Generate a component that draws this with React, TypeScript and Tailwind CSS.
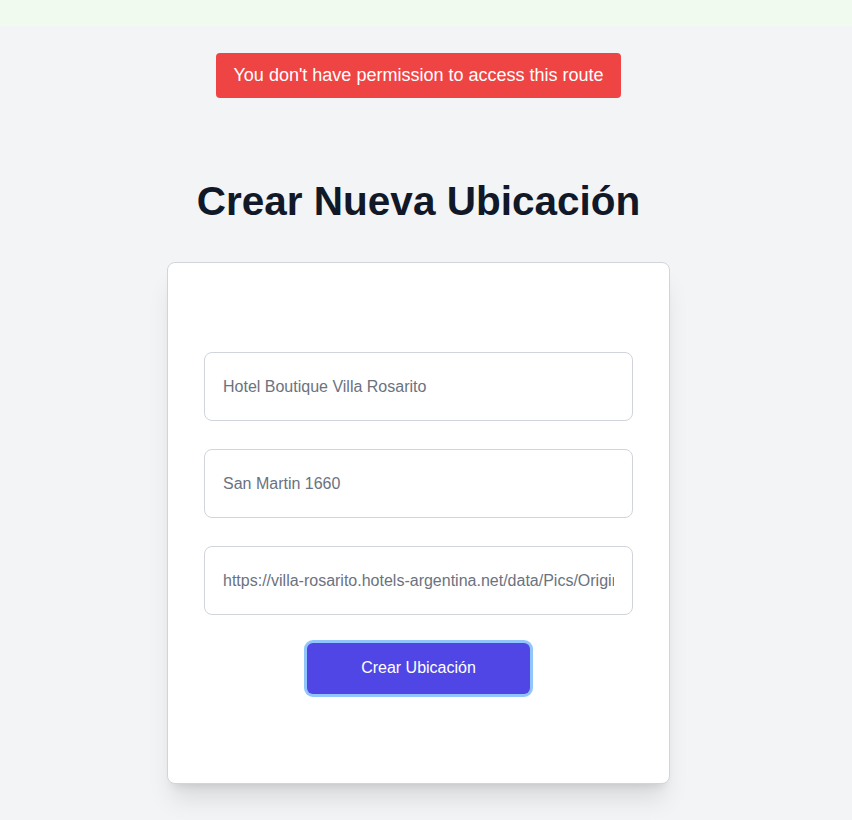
import React from 'react';

export default function App() {
  return (
    <div className="min-h-screen bg-[#f3f4f6] font-['Liberation_Sans',Arial,sans-serif]">
      <div className="h-[26px] bg-[#f0faee]" />

      <div className="w-[837px] flex flex-col items-center pt-[27px] pb-10">
        {/* toast */}
        <div className="bg-[#ef4444] text-white text-[18px] leading-[29px] px-[18px] py-2 rounded">
          You don't have permission to access this route
        </div>

        <h1 className="mt-[79px] text-[40.5px] leading-[48px] font-bold text-[#111827]">
          Crear Nueva Ubicación
        </h1>

        <form
          className="mt-[37px] w-[503px] bg-white border border-[#d1d5db] rounded-lg shadow-xl px-9 pt-[89px] pb-[89px] flex flex-col items-center gap-7"
          onSubmit={(e) => e.preventDefault()}
        >
          <input
            readOnly
            defaultValue="Hotel Boutique Villa Rosarito"
            className="w-full h-[69px] px-[18px] border border-[#d1d5db] rounded-lg text-base text-[#6b7280] outline-none"
          />
          <input
            readOnly
            defaultValue="San Martin 1660"
            className="w-full h-[69px] px-[18px] border border-[#d1d5db] rounded-lg text-base text-[#6b7280] outline-none"
          />
          <input
            readOnly
            defaultValue="https://villa-rosarito.hotels-argentina.net/data/Pics/OriginalPhoto/1234/123456/123456789/hotel-boutique-villa-rosarito.jpg"
            className="w-full h-[69px] px-[18px] border border-[#d1d5db] rounded-lg text-base text-[#6b7280] outline-none"
          />
          <button
            type="submit"
            className="w-[223px] h-[51px] pb-[2px] bg-[#4f46e5] text-white text-base rounded-md ring-[3px] ring-[#93c5fd]"
          >
            Crear Ubicación
          </button>
        </form>
      </div>
    </div>
  );
}
